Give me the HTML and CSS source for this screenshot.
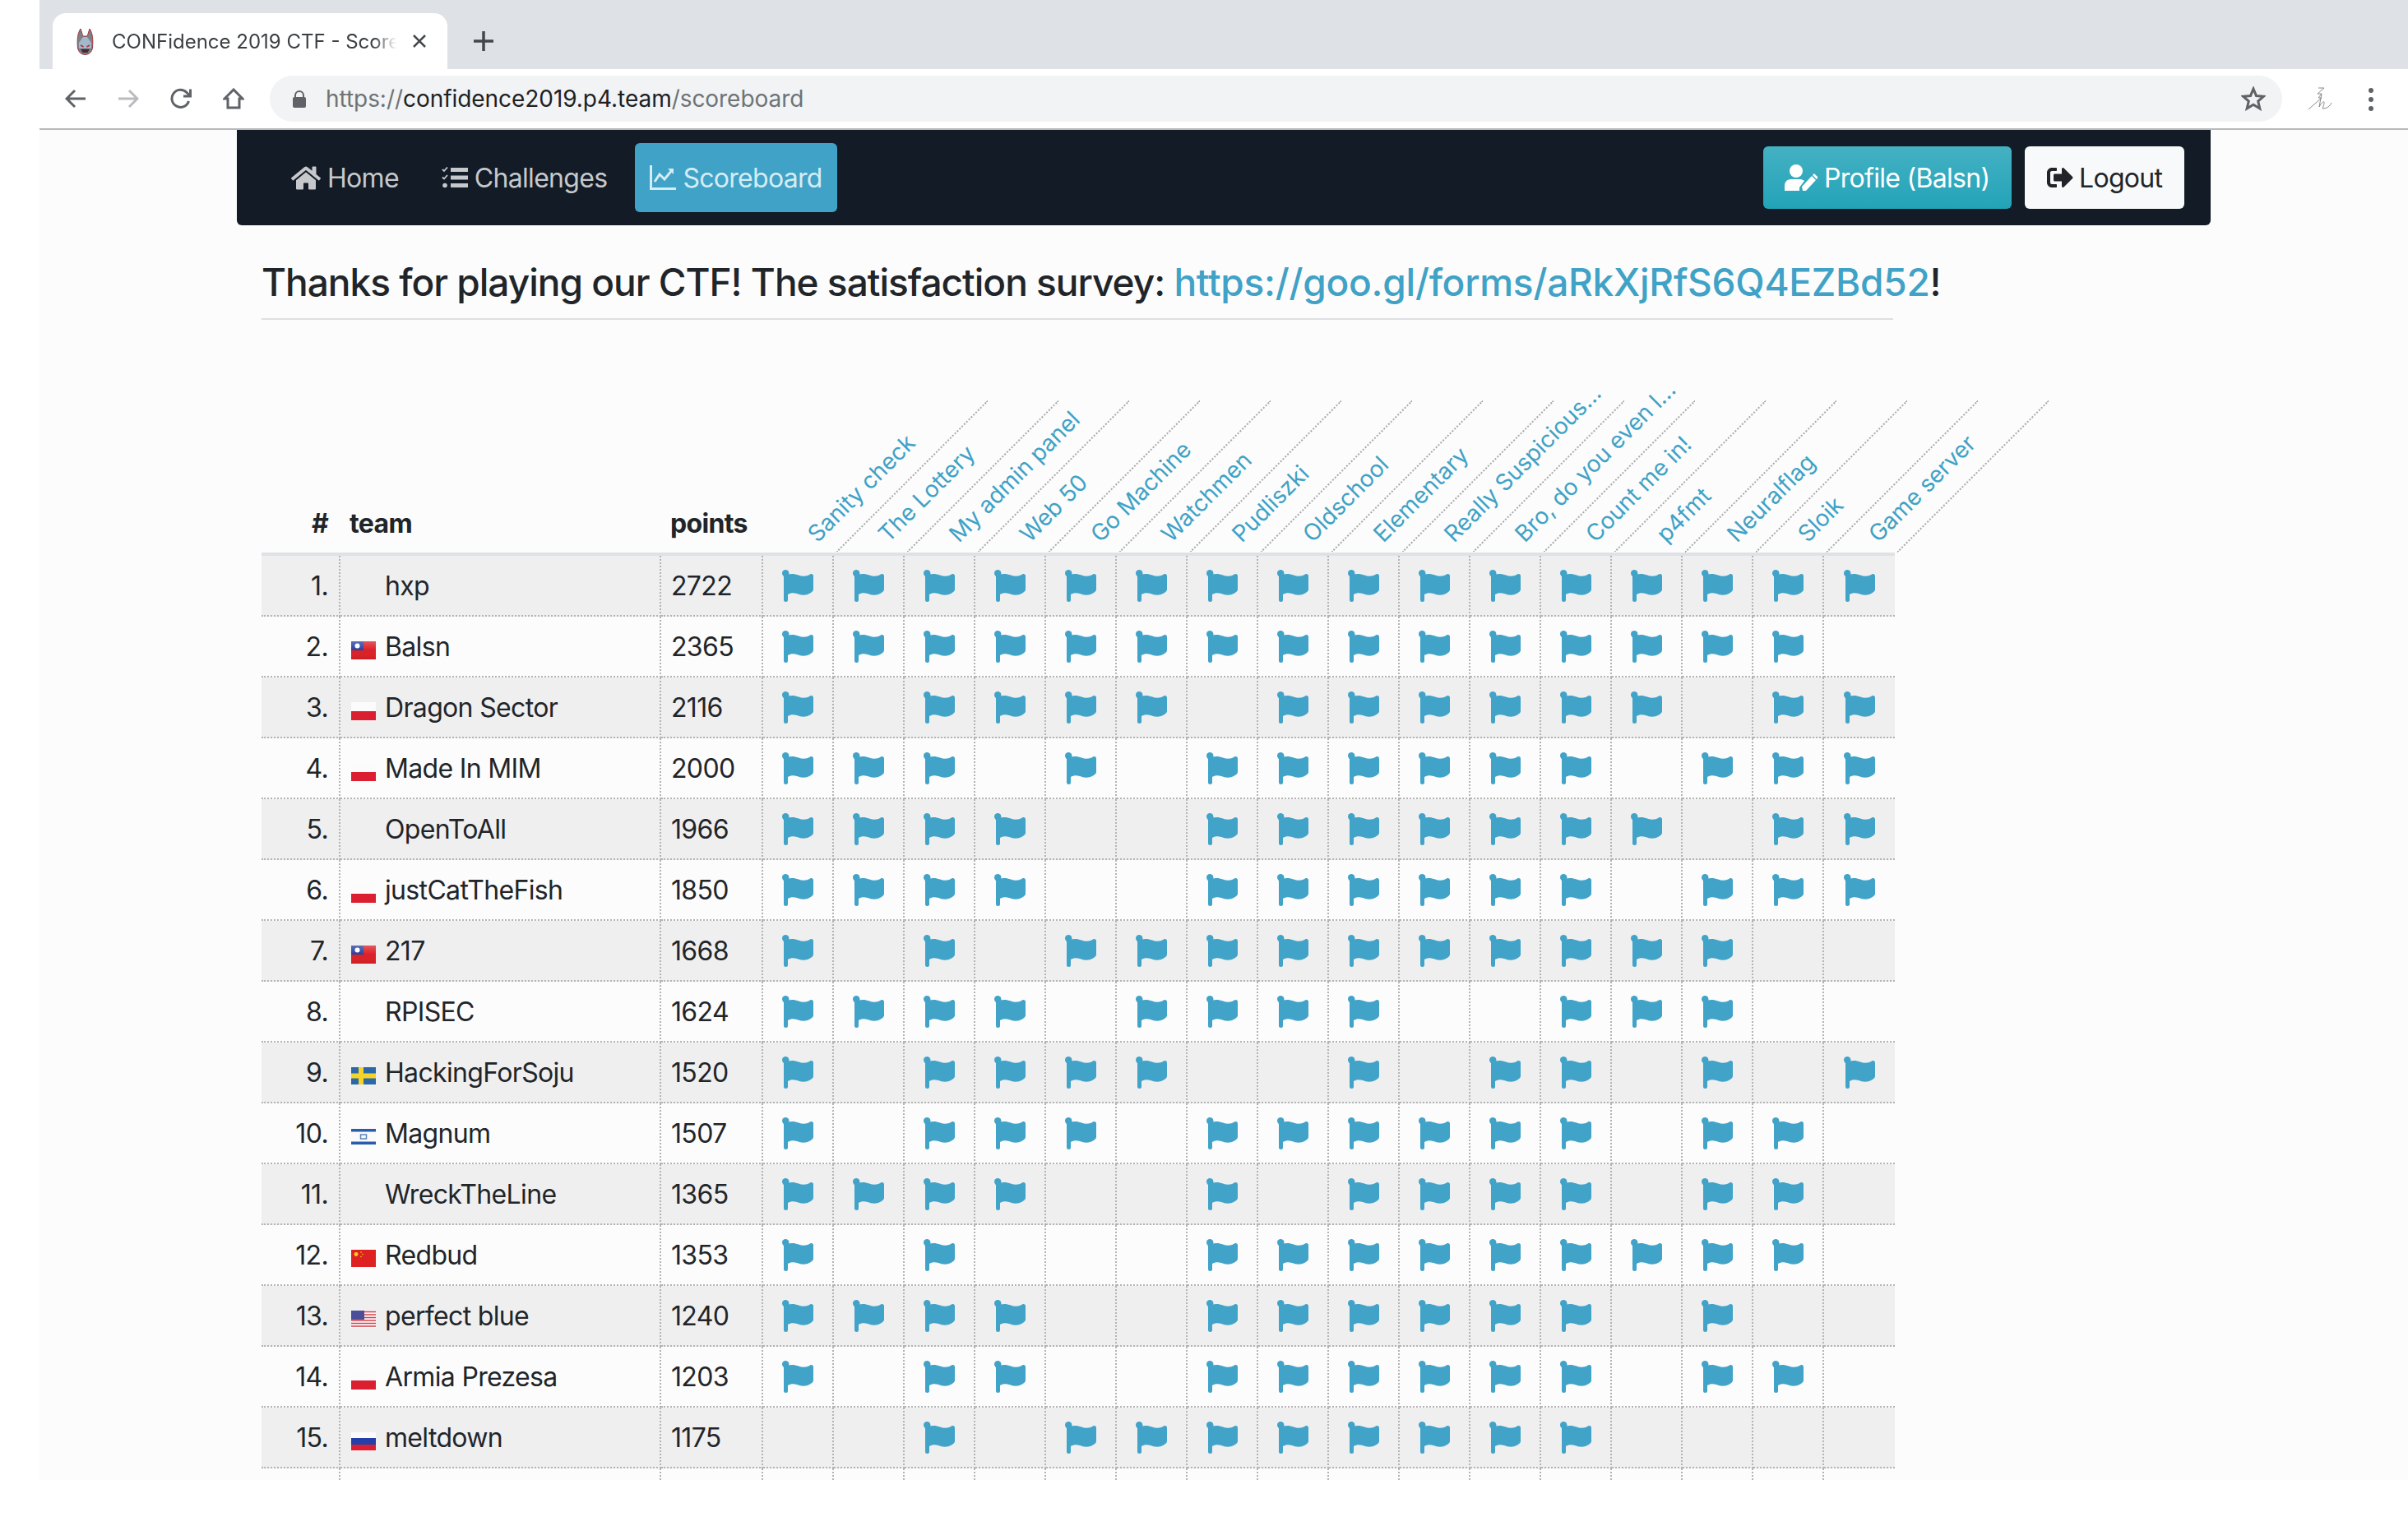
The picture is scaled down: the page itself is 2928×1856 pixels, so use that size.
FILE: index.html
```html
<!DOCTYPE html>
<html lang="en">
<head>
    <meta charset="UTF-8">
    <title>CONFidence 2019 CTF - Scoreboard</title>
    <link rel="stylesheet" href="styles.css">
</head>
<body>
<svg class="defs">
    <symbol id="i-flag" viewBox="0 0 38 39">
        <circle cx="4.2" cy="4.2" r="4.2"/>
        <rect x="2" y="4" width="5" height="35" rx="2.5"/>
        <path d="M7 5.5C12 4.5 16 5 20 6.5C25 8.5 30 8 34 5.5C36 4.5 38 5.5 38 7.5V24C38 26 36 27 34 28.5C28 32 22 30.5 18 29C14 27.5 10 28 7 30Z"/>
    </symbol>
    <linearGradient id="gloss" x1="0" y1="0" x2="0" y2="1">
        <stop offset="0" stop-color="#fff" stop-opacity=".25"/>
        <stop offset=".5" stop-color="#fff" stop-opacity="0"/>
        <stop offset="1" stop-color="#000" stop-opacity=".08"/>
    </linearGradient>
    <symbol id="c-tw" viewBox="0 0 30 23">
        <rect y="1" width="30" height="22" fill="#dc1f26"/>
        <rect y="1" width="15" height="11" fill="#2b3f9e"/>
        <circle cx="7.5" cy="6.5" r="3" fill="#fff"/>
        <rect y="1" width="30" height="22" fill="url(#gloss)"/>
    </symbol>
    <symbol id="c-pl" viewBox="0 0 30 23">
        <rect y="1" width="30" height="11" fill="#fbfbfb"/>
        <rect y="12" width="30" height="11" fill="#dc1f30"/>
    </symbol>
    <symbol id="c-se" viewBox="0 0 30 23">
        <rect y="1" width="30" height="21" fill="#2a68a8"/>
        <rect x="9" y="1" width="6" height="21" fill="#f5d327"/>
        <rect y="8.5" width="30" height="6" fill="#f5d327"/>
    </symbol>
    <symbol id="c-il" viewBox="0 0 30 23">
        <rect y="1" width="30" height="21" fill="#fafafa"/>
        <rect y="2" width="30" height="3.500" fill="#2a5cab"/>
        <rect y="17.500" width="30" height="3.500" fill="#2a5cab"/>
        <rect x="11.500" y="9" width="7" height="5" fill="none" stroke="#5b84c0" stroke-width="1.500"/>
    </symbol>
    <symbol id="c-cn" viewBox="0 0 30 23">
        <rect y="1" width="30" height="21" fill="#de2224"/>
        <circle cx="6" cy="6.500" r="2.400" fill="#f6d21c"/>
        <circle cx="12" cy="4" r=".8" fill="#f6d21c"/>
        <circle cx="14" cy="6.500" r=".8" fill="#f6d21c"/>
        <circle cx="12" cy="9.500" r=".8" fill="#f6d21c"/>
    </symbol>
    <symbol id="c-us" viewBox="0 0 30 23">
        <rect y="1" width="30" height="21" fill="#fafafa"/>
        <path d="M0 2.500H30M0 6H30M0 9.500H30M0 13H30M0 16.500H30M0 20H30" stroke="#d5404c" stroke-width="1.700"/>
        <rect y="1" width="16" height="11" fill="#4a4f97"/>
    </symbol>
    <symbol id="c-ru" viewBox="0 0 30 23">
        <rect y="1" width="30" height="7" fill="#fbfbfb"/>
        <rect y="8" width="30" height="8" fill="#2440a8"/>
        <rect y="16" width="30" height="7" fill="#dc1f30"/>
    </symbol>
</svg>

<div class="window">
    <div class="tabstrip">
        <div class="tab">
            <svg class="favicon" viewBox="0 0 21 33">
                <path d="M5 1C1.500 6 0.500 14 1.500 24C2 29 6 32.500 10.500 32.500C15 32.500 19 29 19.500 24C20.500 14 19.500 6 16 1C14.500 5 14 8 13 10H8C7 8 6.500 5 5 1Z" fill="#7d8287" stroke="#a8323c"/>
                <path d="M8 11H13L18 18V24C16 26 14 25 10.500 25C7 25 5 26 3 24V18Z" fill="#a3b8ca"/>
                <path d="M5 25.500H16L13.500 30H7.500Z" fill="#4a2a32"/>
                <path d="M5 21L8.500 23M16 21L12.500 23" stroke="#a8323c" stroke-width="1.500"/>
            </svg>
            <span class="tab-title">CONFidence 2019 CTF - Scoreboard</span>
            <svg class="tab-close" viewBox="0 0 18 18"><path d="M2 2L16 16M16 2L2 16"/></svg>
        </div>
        <svg class="new-tab" viewBox="0 0 24 24"><path d="M12 0V24M0 12H24"/></svg>
    </div>

    <div class="toolbar">
        <svg class="tool" viewBox="0 0 26 26"><path d="M25 13H3M12 3L2 13L12 23"/></svg>
        <svg class="tool tool-off" viewBox="0 0 26 26"><path d="M1 13H23M14 3L24 13L14 23"/></svg>
        <svg class="tool" viewBox="0 0 26 26"><path d="M22.500 16A10.500 10.500 0 1 1 20 5.500L24 9.500M24.500 1.500V10H16"/></svg>
        <svg class="tool" viewBox="0 0 26 26"><path d="M13 2L2 13H6V24H20V13H24Z"/></svg>
        <div class="omnibox">
            <svg class="lock" viewBox="0 0 16 21"><path d="M3 9V6a5 5 0 0 1 10 0V9" fill="none" stroke="#5f6368" stroke-width="2"/><rect y="8" width="16" height="13" rx="2" fill="#5f6368"/></svg>
            <span class="url"><span class="url-dim">https://</span>confidence2019.p4.team<span class="url-dim">/scoreboard</span></span>
            <svg class="star" viewBox="0 0 30 30"><path d="M15 3L18.500 11.500L27.500 12.200L20.700 18L22.800 27L15 22.200L7.200 27L9.300 18L2.500 12.200L11.500 11.500Z"/></svg>
        </div>
        <svg class="ext" viewBox="0 0 30 28"><path d="M13 1L20 1L12 8L17 8L13 13L17 13L1 27M17 8L14 24C20 14 22 17 18 26C24 26 27 23 29 19"/></svg>
        <div class="menu-dots"><i></i><i></i><i></i></div>
    </div>

    <div class="page">
        <nav class="navbar">
            <a class="nav-link">
                <svg class="ico ico-home" viewBox="0 0 576 512"><path d="M280.37 148.26L96 300.11V464a16 16 0 0 0 16 16l112.06-.29a16 16 0 0 0 15.92-16V368a16 16 0 0 1 16-16h64a16 16 0 0 1 16 16v95.64a16 16 0 0 0 16 16.05L464 480a16 16 0 0 0 16-16V300L295.67 148.26a12.19 12.19 0 0 0-15.3 0zM571.6 251.47L488 182.56V44.05a12 12 0 0 0-12-12h-56a12 12 0 0 0-12 12v72.61L318.47 43a48 48 0 0 0-61 0L4.34 251.47a12 12 0 0 0-1.6 16.9l25.5 31A12 12 0 0 0 45.15 301l235.22-193.74a12.19 12.19 0 0 1 15.3 0L530.9 301a12 12 0 0 0 16.9-1.6l25.5-31a12 12 0 0 0-1.7-16.93z"/></svg>
                Home
            </a>
            <a class="nav-link">
                <svg class="ico ico-tasks" viewBox="0 0 32 26"><path d="M11 1H32V6H11ZM11 10.500H32V15.500H11ZM11 20H32V25H11Z"/><path d="M1 3L3 5L7 0.500M1 12.500L3 14.500L7 10" fill="none" stroke="currentColor" stroke-width="1.800"/><circle cx="4" cy="22.500" r="2.800"/></svg>
                Challenges
            </a>
            <a class="nav-link nav-active">
                <svg class="ico ico-chart" viewBox="0 0 32 30"><path d="M1.500 0V28.500H32" fill="none" stroke="currentColor" stroke-width="3"/><path d="M6 20L12 11L18 17L27 6" fill="none" stroke="currentColor" stroke-width="3"/><path d="M22 4H29V11Z"/></svg>
                Scoreboard
            </a>
            <div class="nav-right">
                <a class="btn btn-profile">
                    <svg class="ico ico-user" viewBox="0 0 40 32"><circle cx="14" cy="8" r="8"/><path d="M0 32V26C0 21 3 18 8 18H19C21 18 23 19 24 20L18 28V32Z"/><path d="M22 32L21 27L33 14L38 19L26 32ZM34 13L36 11L41 16L39 18Z"/></svg>
                    Profile (Balsn)
                </a>
                <a class="btn btn-logout">
                    <svg class="ico ico-out" viewBox="0 0 512 512"><path d="M497 273L329 441c-15 15-41 4.500-41-17v-96H152c-13.300 0-24-10.700-24-24v-96c0-13.300 10.700-24 24-24h136V88c0-21.400 25.900-32 41-17l168 168c9.300 9.400 9.300 24.600 0 34zM192 436v-40c0-6.600-5.400-12-12-12H96c-17.700 0-32-14.300-32-32V160c0-17.700 14.300-32 32-32h84c6.600 0 12-5.400 12-12V76c0-6.600-5.400-12-12-12H96c-53 0-96 43-96 96v192c0 53 43 96 96 96h84c6.600 0 12-5.400 12-12z"/></svg>
                    Logout
                </a>
            </div>
        </nav>

        <div class="content">
            <h3 class="notice">Thanks for playing our CTF! The satisfaction survey: <a class="notice-link">https://goo.gl/forms/aRkXjRfS6Q4EZBd52</a>!</h3>
            <div class="notice-rule"></div>
            <table class="scoreboard">
                <thead><tr id="headRow">
                    <th class="col-rank">#</th>
                    <th class="col-team">team</th>
                    <th class="col-points">points</th>
                </tr></thead>
                <tbody id="rows"></tbody>
            </table>
        </div>
    </div>
</div>
<script src="scoreboard.js"></script>
</body>
</html>
```

FILE: styles.css
```css
* {box-sizing: border-box}
body {
    font-family: Inter, "Liberation Sans", sans-serif;
    margin: 0;
    padding: 0;
    background-color: #fff;
    color: #212529;
}
.defs {
    width: 0;
    height: 0;
    display: block;
}

.window {
    margin-left: 48px;
    height: 1800px;
    overflow: hidden;
    background: #fcfcfc;
}

/* browser chrome */
.tabstrip {
    height: 84px;
    background: #dee1e6;
    display: flex;
    align-items: flex-end;
    padding-left: 16px;
}
.tab {
    width: 480px;
    height: 68px;
    background: #fff;
    border-radius: 16px 16px 0 0;
    display: flex;
    align-items: center;
    padding-left: 29px;
}
.favicon {
    width: 21px;
    height: 33px;
    flex: none;
}
.tab-title {
    margin-left: 22px;
    width: 346px;
    font-size: 24px;
    color: #3c4043;
    white-space: nowrap;
    overflow: hidden;
    -webkit-mask-image: linear-gradient(to right, #000 92%, transparent 100%);
}
.tab-close {
    width: 18px;
    height: 18px;
    margin-left: 19px;
    flex: none;
    fill: none;
    stroke: #44474b;
    stroke-width: 2.500;
}
.new-tab {
    width: 24px;
    height: 24px;
    margin: 0 0 22px 32px;
    fill: none;
    stroke: #44474b;
    stroke-width: 3.500;
}
.toolbar {
    height: 74px;
    background: #fff;
    border-bottom: 2px solid #b8b9bb;
    display: flex;
    align-items: flex-start;
    padding: 8px 0 0 31px;
}
.tool {
    width: 26px;
    height: 26px;
    margin: 15px 38px 0 0;
    flex: none;
    fill: none;
    stroke: #5f6368;
    stroke-width: 3;
}
.tool-off {
    stroke: #b9bbbe;
}
.omnibox {
    width: 2447px;
    height: 56px;
    margin-left: -7px;
    background: #f1f3f4;
    border-radius: 28px;
    display: flex;
    align-items: center;
    padding-left: 28px;
}
.lock {
    width: 16px;
    height: 21px;
    flex: none;
}
.url {
    margin-left: 24px;
    font-size: 28px;
    letter-spacing: -0.05px;
    color: #202124;
    white-space: nowrap;
}
.url-dim {
    color: #6f7377;
}
.star {
    width: 30px;
    height: 30px;
    margin-left: auto;
    margin-right: 20px;
    fill: none;
    stroke: #5f6368;
    stroke-width: 3;
}
.ext {
    width: 30px;
    height: 28px;
    margin: 14px 0 0 31px;
    fill: none;
    stroke: #8a8a8a;
    stroke-width: 1;
}
.menu-dots {
    margin: 15px 0 0 44px;
    display: flex;
    flex-direction: column;
    gap: 5px;
}
.menu-dots i {
    width: 6px;
    height: 6px;
    border-radius: 50%;
    background: #5f6368;
}

/* navbar */
.page {
    padding: 0 240px;
}
.navbar {
    height: 116px;
    background-color: #121b26;
    border-radius: 0 0 6px 6px;
    display: flex;
    align-items: center;
    padding: 0 32px 0 48px;
    gap: 16px;
}
.nav-link {
    height: 84px;
    padding: 0 18px;
    display: flex;
    align-items: center;
    gap: 8px;
    font-size: 32px;
    letter-spacing: -0.7px;
    color: #c6c8cb;
    border-radius: 6px;
}
.nav-active {
    background-color: #3fa2c6;
    color: #d4ecf4;
}
.ico {
    fill: currentColor;
    flex: none;
}
.ico-home {
    width: 36px;
    height: 33px;
}
.ico-tasks {
    width: 32px;
    height: 26px;
}
.ico-chart {
    width: 32px;
    height: 30px;
}
.ico-user {
    width: 40px;
    height: 32px;
}
.ico-out {
    width: 32px;
    height: 32px;
}
.nav-right {
    margin-left: auto;
    display: flex;
    gap: 16px;
}
.btn {
    height: 76px;
    display: flex;
    align-items: center;
    gap: 8px;
    font-size: 32px;
    letter-spacing: -0.7px;
    border-radius: 6px;
}
.btn-profile {
    width: 302px;
    padding-left: 26px;
    color: #fff;
    background: linear-gradient(#44b1c3, #23a3b8);
}
.btn-logout {
    width: 194px;
    padding-left: 27px;
    gap: 7px;
    color: #212529;
    background: #f8f9fa;
}

/* scoreboard */
.content {
    padding: 0 30px;
}
.notice {
    margin: 40px 0 0;
    font-size: 46px;
    line-height: 58px;
    font-weight: 500;
    letter-spacing: -1px;
    white-space: nowrap;
}
.notice-link {
    color: #3fa2c6;
    letter-spacing: -0.25px;
}
.notice-rule {
    width: 1984px;
    height: 2px;
    margin-top: 15px;
    background: #dddfe1;
}
.scoreboard {
    border-collapse: separate;
    border-spacing: 0;
    table-layout: fixed;
    width: 1986px;
    margin-top: 103px;
    font-size: 32px;
    letter-spacing: -0.66px;
}
.scoreboard th {
    height: 184px;
    vertical-align: bottom;
    font-weight: 700;
    padding: 0 0 16px;
    text-align: left;
    border-bottom: 4px solid #dee2e6;
}
.col-rank {
    width: 96px;
    text-align: right !important;
    padding-right: 15px !important;
}
.col-team {
    width: 390px;
    padding-left: 11px !important;
}
.col-points {
    width: 124px;
    padding-left: 11px !important;
}
.scoreboard .col-chal {
    width: 86px;
    padding: 0;
    position: relative;
    font-weight: 400;
    letter-spacing: 0;
}
.chal-line {
    position: absolute;
    left: 86px;
    bottom: 0;
    width: 260px;
    border-top: 2px dotted #a9a9a9;
    transform-origin: left bottom;
    transform: translate(4px, 0) rotate(-45deg);
}
.chal-name {
    display: block;
    width: 0;
    height: 0;
    margin: 0 0 18px 59px;
    white-space: nowrap;
    font-size: 28px;
    line-height: 0;
    color: #3fa2c6;
    transform-origin: left center;
    transform: rotate(-45deg);
}
.scoreboard td {
    height: 74px;
    padding: 0;
    border-bottom: 2px dotted #b4b4b4;
    border-right: 2px dotted #b4b4b4;
}
.scoreboard td:last-child {
    border-right: none;
}
.scoreboard tbody tr:nth-child(odd) {
    background-color: #efeff0;
}
.cell-rank {
    text-align: right;
    padding-right: 13px !important;
}
.team-cell {
    display: flex;
    align-items: center;
    padding-left: 13px;
    white-space: nowrap;
}
.country {
    width: 30px;
    height: 23px;
    margin: 8px 11px 0 0;
    flex: none;
}
.cell-points {
    padding-left: 12px !important;
}
.cell-flag {
    text-align: center;
}
.solved {
    display: block;
    width: 38px;
    height: 39px;
    margin: 0 auto;
    fill: #42a3c8;
}
```

FILE: scoreboard.js
```js
const challenges = ['Sanity check', 'The Lottery', 'My admin panel', 'Web 50', 'Go Machine', 'Watchmen', 'Pudliszki', 'Oldschool',
    'Elementary', 'Really Suspicious...', 'Bro, do you even l...', 'Count me in!', 'p4fmt', 'Neuralflag', 'Sloik', 'Game server'];

const teams = [
    ['hxp', '', 2722, '1111111111111111'],
    ['Balsn', 'tw', 2365, '1111111111111110'],
    ['Dragon Sector', 'pl', 2116, '1011110111111011'],
    ['Made In MIM', 'pl', 2000, '1110101111110111'],
    ['OpenToAll', '', 1966, '1111001111111011'],
    ['justCatTheFish', 'pl', 1850, '1111001111110111'],
    ['217', 'tw', 1668, '1010111111111100'],
    ['RPISEC', '', 1624, '1111011110011100'],
    ['HackingForSoju', 'se', 1520, '1011110010110101'],
    ['Magnum', 'il', 1507, '1011101111110110'],
    ['WreckTheLine', '', 1365, '1111001011110110'],
    ['Redbud', 'cn', 1353, '1010001111111110'],
    ['perfect blue', 'us', 1240, '1111001111110100'],
    ['Armia Prezesa', 'pl', 1203, '1011001111110110'],
    ['meltdown', 'ru', 1175, '0010111111110000']
];

const headRow = document.getElementById('headRow');
challenges.forEach(name => {
    headRow.insertAdjacentHTML('beforeend',
        `<th class="col-chal"><span class="chal-line"></span><span class="chal-name">${name}</span></th>`);
});

let content = '';
teams.forEach((team, i) => {
    const flag = team[1] ? `<svg class="country"><use href="#c-${team[1]}"/></svg>` : '<span class="country"></span>';
    content += `<tr><td class="cell-rank">${i + 1}.</td>`;
    content += `<td><div class="team-cell">${flag}${team[0]}</div></td>`;
    content += `<td class="cell-points">${team[2]}</td>`;
    for (const s of team[3]) {
        content += '<td class="cell-flag">' + (s === '1' ? '<svg class="solved"><use href="#i-flag"/></svg>' : '') + '</td>';
    }
    content += '</tr>';
});
// the next row is cut off by the bottom of the window
content += '<tr><td></td><td></td><td></td>' + '<td></td>'.repeat(16) + '</tr>';
document.getElementById('rows').innerHTML = content;
```
